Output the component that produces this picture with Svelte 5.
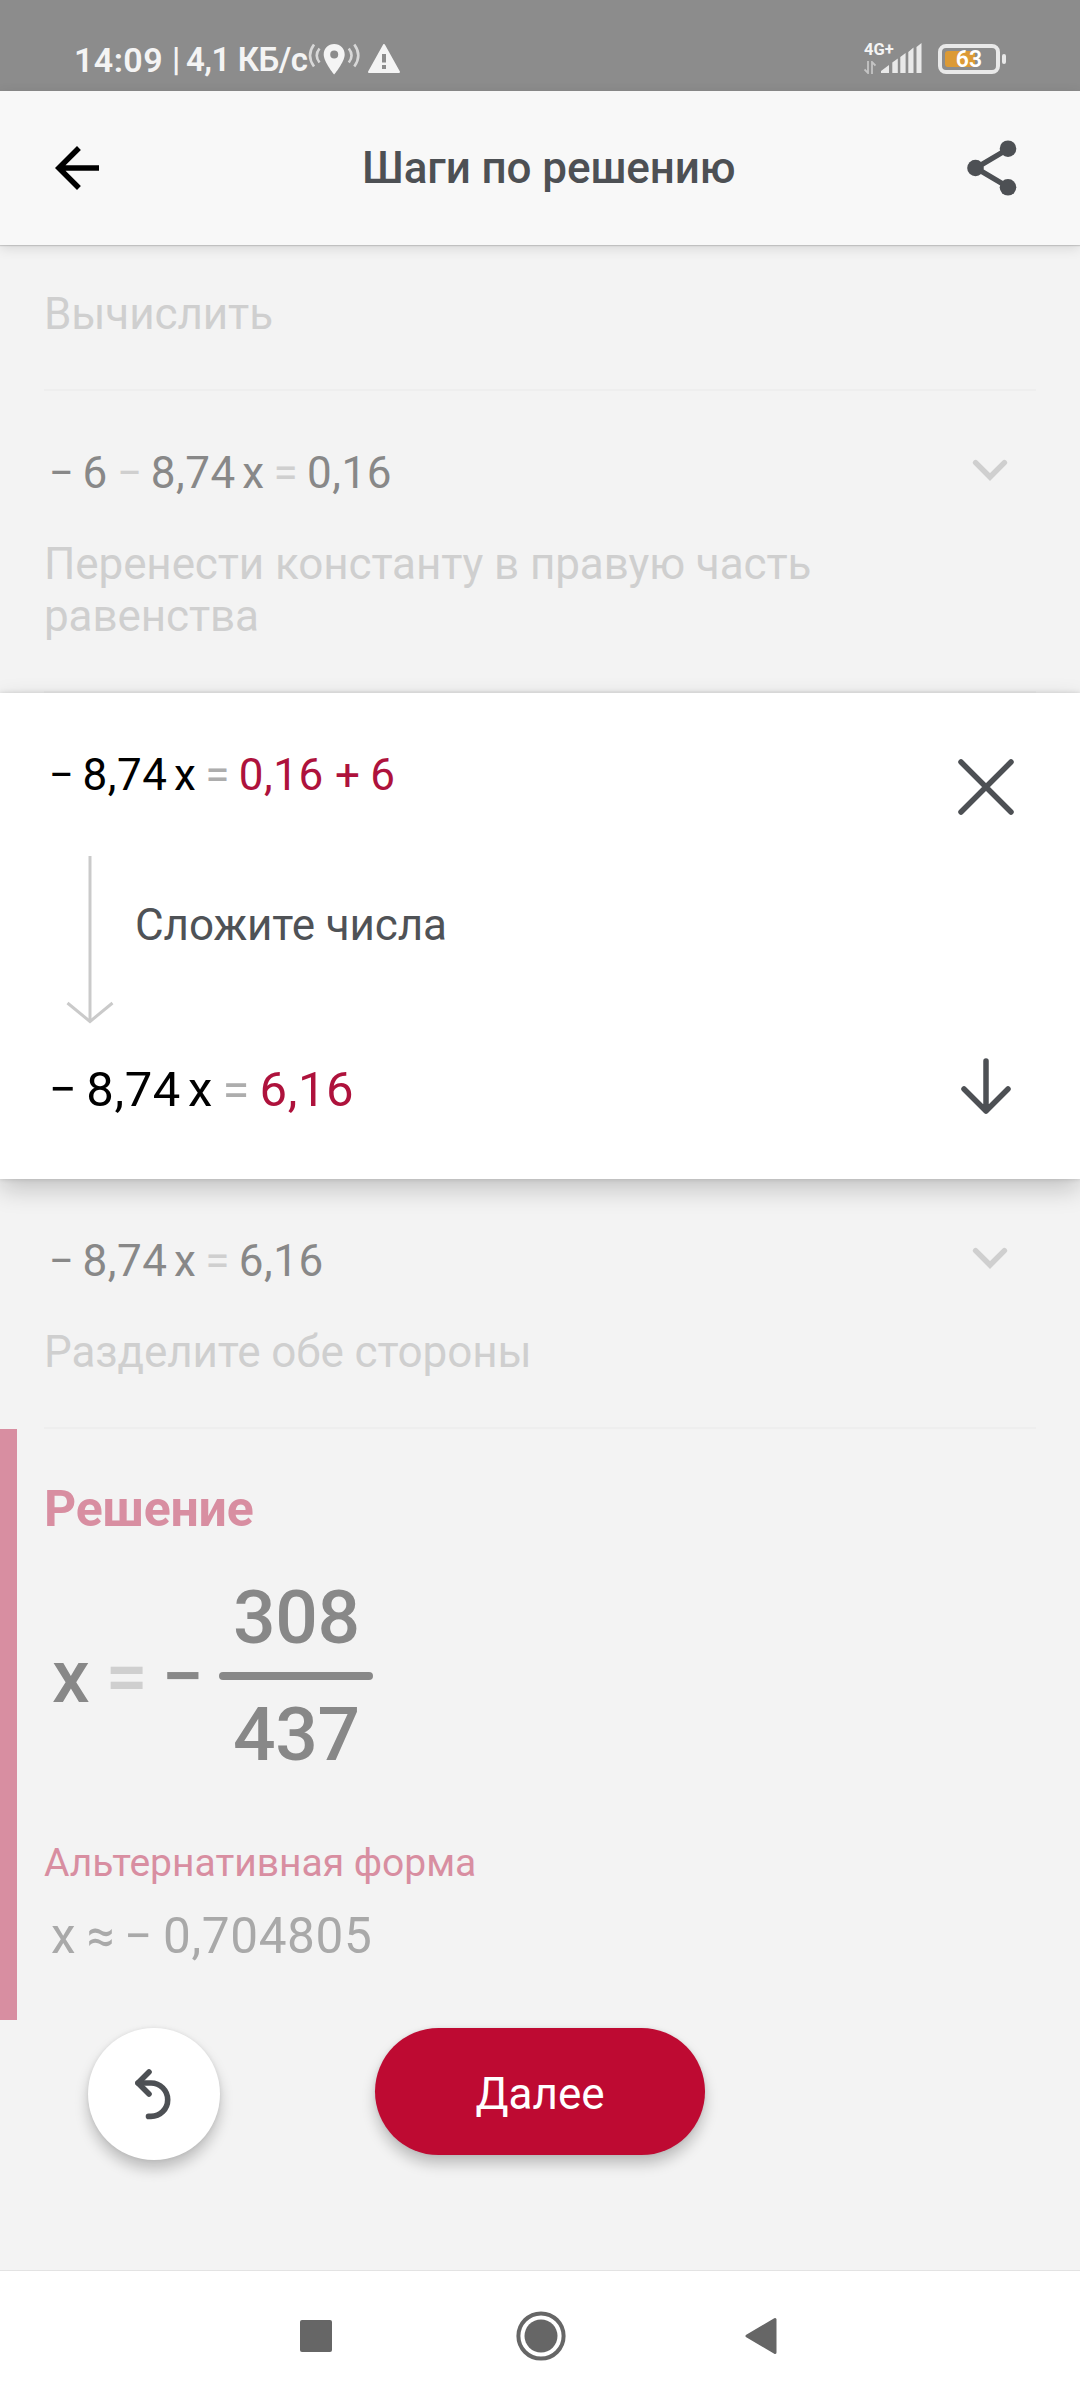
<script>
  const intro = 'Вычислить';

  const moveStep = {
    equation: [
      ['neg', '−'], ['num', '6'], ['op', '−'], ['num', '8,74'],
      ['var', 'x'], ['op', '='], ['num', '0,16'],
    ],
    text: 'Перенести константу в правую часть равенства',
  };

  const divideStep = {
    equation: [
      ['neg', '−'], ['num', '8,74'], ['var', 'x'], ['op', '='], ['num', '6,16'],
    ],
    text: 'Разделите обе стороны',
  };

  const before = [
    ['neg', '−'], ['num', '8,74'], ['var', 'x'], ['op', '='],
    ['num hot', '0,16'], ['op hot plus', '+'], ['num hot', '6'],
  ];
  const after = [
    ['neg', '−'], ['num', '8,74'], ['var', 'x'], ['op', '='], ['num hot', '6,16'],
  ];
  const approx = [
    ['var', 'x'], ['op same', '≈'], ['neg', '−'], ['num', '0,704805'],
  ];
</script>

{#snippet math(tokens)}
  {#each tokens as [kind, text]}
    <span class={kind}>{text}</span>
  {/each}
{/snippet}

{#snippet step(item)}
  <section class="step">
    <div class="row">
      <div class="math">{@render math(item.equation)}</div>
      <svg class="chevron" width="36" height="22" viewBox="0 0 36 22">
        <path d="M3.6 3.6 18 18 32.4 3.6" />
      </svg>
    </div>
    <p>{item.text}</p>
    <hr />
  </section>
{/snippet}

<div class="screen">
  <div class="status">
    <span class="clock">14:09</span>
    <span class="pipe">|</span>
    <span class="speed">4,1 КБ/с</span>
    <svg class="locate" width="52" height="32" viewBox="308 43 52 32">
      <path class="wave" d="M314 44.500q-8 11 0 22M319.500 48.500q-5.500 7 0 14M348.800 48.500q5.500 7 0 14M354.300 44.500q8 11 0 22" />
      <path d="M334.200 44c-6 0-10.500 4.500-10.500 10.500 0 7.500 10.500 20 10.500 20s10.500-12.500 10.500-20c0-6-4.500-10.500-10.500-10.500zm0 14.500a4 4 0 1 1 0-8 4 4 0 0 1 0 8z" />
    </svg>
    <svg class="warn" width="32" height="30" viewBox="0 0 32 30">
      <path d="M16 1 31 28H1z" stroke-width="2" stroke-linejoin="round" />
      <path class="mark" d="M16 10v8.500M16 21v4" />
    </svg>
    <div class="network">
      <span>4G+</span>
      <svg width="12" height="13" viewBox="0 0 12 13">
        <path d="M4 0v12L.5 8.500M8 13V1l3.500 3.500" />
      </svg>
    </div>
    <svg class="signal" width="41" height="31" viewBox="0 0 41 31">
      <path d="M0 30v-2l8-6v8zM11.300 30V19.500l5.500-4V30zM19.300 30V14l5.300-4v20zM27.300 30V9l5.200-4.500V30zM35.500 30V4l5-4v30z" />
    </svg>
    <div class="battery"><i></i><b>63</b></div>
    <div class="knob"></div>
  </div>

  <header>
    <svg width="66" height="66" viewBox="0 0 24 24">
      <path d="M20 11H7.830l5.590-5.590L12 4l-8 8 8 8 1.410-1.410L7.830 13H20z" />
    </svg>
    <h1>Шаги по решению</h1>
    <svg class="share" width="52" height="56" viewBox="0 0 52 56">
      <path d="M42 9 10 28l32 19" />
      <circle cx="42" cy="8.700" r="8.300" />
      <circle cx="9.500" cy="28" r="8.300" />
      <circle cx="42" cy="47.300" r="8.300" />
    </svg>
  </header>

  <main>
    <section class="step intro">
      <p>{intro}</p>
      <hr />
    </section>
    {@render step(moveStep)}

    <article class="card">
      <div class="work">
        <div class="math">{@render math(before)}</div>
        <div class="transition">
          <svg width="48" height="168" viewBox="0 0 48 168">
            <path d="M24 0v165" />
            <path d="M1.500 147 24 165.500 46.500 147" />
          </svg>
          <span>Сложите числа</span>
        </div>
        <div class="math large">{@render math(after)}</div>
      </div>
      <div class="controls">
        <svg width="56" height="56" viewBox="0 0 56 56">
          <path d="M3 3l50 50M53 3 3 53" />
        </svg>
        <svg width="56" height="56" viewBox="0 0 56 56">
          <path d="M28 3v50M6 31l22 22 22-22" />
        </svg>
      </div>
    </article>

    {@render step(divideStep)}

    <section class="solution">
      <h2>Решение</h2>
      <div class="math result">
        <span class="var">x</span>
        <span class="op">=</span>
        <span class="neg">−</span>
        <div class="fraction">
          <span>308</span>
          <i></i>
          <span>437</span>
        </div>
      </div>
      <h3>Альтернативная форма</h3>
      <div class="math approx">{@render math(approx)}</div>
    </section>

    <div class="actions">
      <button class="undo" aria-label="Назад">
        <svg width="40" height="52" viewBox="0 0 40 52">
          <path d="M15 4 4 15l11 11" />
          <path d="M4 15h13a16.700 16.700 0 0 1 0 33.400h-2.500" />
        </svg>
      </button>
      <button class="next">Далее</button>
    </div>
  </main>

  <nav>
    <svg width="34" height="34" viewBox="0 0 34 34"><rect x="1" y="1" width="32" height="32" rx="2" /></svg>
    <svg class="home" width="50" height="50" viewBox="0 0 50 50">
      <circle class="ring" cx="25" cy="25" r="22.600" />
      <circle cx="25" cy="25" r="16.500" />
    </svg>
    <svg width="34" height="38" viewBox="0 0 34 38">
      <path d="M3 19 31 2.500v33z" stroke-width="3" stroke-linejoin="round" />
    </svg>
  </nav>
</div>

<style>
  :global(body) {
    margin: 0;
    background: #f3f3f3;
  }

  .screen {
    width: 1080px;
    height: 2400px;
    display: flex;
    flex-direction: column;
    overflow: hidden;
    background: #f3f3f3;
    font-family: Roboto, 'Liberation Sans', sans-serif;
  }

  svg {
    display: block;
    flex: none;
  }

  h1, h2, h3, p, hr {
    margin: 0;
  }

  /* Status bar */
  .status {
    height: 91px;
    flex: none;
    box-sizing: border-box;
    padding: 40px 74px 0 74px;
    display: flex;
    align-items: flex-start;
    background: #8c8c8c;
    color: #f4f4f4;
    font-size: 33px;
    line-height: 40px;
    font-weight: 600;
    white-space: nowrap;
  }

  .clock {
    width: 98px;
    font-size: 34px;
    letter-spacing: 0.4px;
  }

  .pipe {
    width: 14px;
  }

  .speed {
    width: 122px;
    letter-spacing: -0.5px;
  }

  .locate {
    margin-top: 3px;
    fill: #f4f4f4;
  }

  .wave {
    fill: none;
    stroke: #d8d8d8;
    stroke-width: 2.6;
  }

  .warn {
    margin: 4px 0 0 8px;
    fill: #f4f4f4;
    stroke: #f4f4f4;
  }

  .warn .mark {
    stroke: #8c8c8c;
    stroke-width: 4;
  }

  .network {
    margin: 3px 0 0 auto;
    width: 17px;
    display: flex;
    flex-direction: column;
    gap: 5px;
    font-size: 16.500px;
    line-height: 13px;
    font-weight: 700;
  }

  .network path {
    fill: none;
    stroke: #c4c4c4;
    stroke-width: 1.8;
  }

  .signal {
    margin-top: 3px;
    fill: #e9e9e9;
  }

  .battery {
    position: relative;
    margin: 4px 0 0 16px;
    box-sizing: border-box;
    width: 62px;
    height: 30px;
    border: 4px solid #e9e9e9;
    border-radius: 8px;
    padding: 3px;
    line-height: 16px;
  }

  .battery i {
    display: block;
    width: 30px;
    height: 16px;
    border-radius: 3px;
    background: #dc9a35;
  }

  .battery b {
    position: absolute;
    inset: 0;
    line-height: 24px;
    font-size: 23px;
    font-weight: 600;
    text-align: center;
    color: #fff;
  }

  .knob {
    margin: 14px 0 0 2px;
    width: 4px;
    height: 10px;
    border-radius: 2px;
    background: #e9e9e9;
  }

  /* App bar */
  header {
    position: relative;
    z-index: 1;
    height: 154px;
    flex: none;
    box-sizing: border-box;
    padding: 0 62px 0 44px;
    display: flex;
    align-items: center;
    background: #f8f8f8;
    box-shadow: 0 1px 1px rgba(0, 0, 0, 0.14), 0 3px 12px rgba(0, 0, 0, 0.12);
  }

  h1 {
    margin: 0 auto 0 252px;
    font-size: 44px;
    line-height: 52px;
    font-weight: 500;
    color: #4d5054;
    letter-spacing: -0.1px;
  }

  .share {
    fill: #4d5054;
  }

  .share path {
    fill: none;
    stroke: #4d5054;
    stroke-width: 5.5;
  }

  /* Steps */
  main {
    flex: 1;
    display: flex;
    flex-direction: column;
  }

  .step {
    padding: 56px 44px 0;
    font-size: 44px;
    line-height: 52px;
    color: #cfcfcf;
  }

  .step.intro {
    padding-top: 43px;
  }

  .step p {
    width: 830px;
    letter-spacing: -0.1px;
  }

  .step hr {
    height: 2px;
    margin-top: 49px;
    border: 0;
    background: #eee;
  }

  .row {
    display: flex;
    justify-content: space-between;
    margin-bottom: 39px;
  }

  .chevron {
    margin: 12px 28px 0 0;
    fill: none;
    stroke: #cfcfcf;
    stroke-width: 5.5;
    stroke-linecap: round;
  }

  /* Equations */
  .math {
    display: flex;
    gap: 0.148em;
    padding-left: 2px;
    font-size: 44px;
    line-height: 52px;
    color: #888;
    white-space: nowrap;
  }

  .op, .neg {
    width: 0.682em;
    text-align: center;
  }

  .op {
    color: #cfcfcf;
  }

  .op + .neg {
    margin-left: -0.09em;
  }

  .num {
    letter-spacing: 0.012em;
  }

  .large {
    font-size: 49px;
    line-height: 58px;
    gap: 0.142em;
  }

  .plus {
    margin: 0 0.03em 0 0.05em;
  }

  /* Expanded step */
  .card {
    position: relative;
    z-index: 1;
    height: 486px;
    box-sizing: border-box;
    display: flex;
    justify-content: space-between;
    background: #fff;
    box-shadow: 0 10px 24px rgba(0, 0, 0, 0.2), 0 0 5px rgba(0, 0, 0, 0.14);
  }

  .work {
    padding: 56px 0 0 44px;
  }

  .card .math {
    color: #000;
  }

  .card .op {
    color: #adadad;
  }

  .card .hot {
    color: #ae123c;
  }

  .transition {
    display: flex;
    align-items: center;
    gap: 21px;
    margin: 55px 0 37px 22px;
    font-size: 44px;
    line-height: 52px;
    color: #4f5256;
    letter-spacing: -0.1px;
  }

  .transition span {
    padding-bottom: 31px;
  }

  .transition svg {
    fill: none;
    stroke: #cacaca;
    stroke-width: 3;
  }

  .controls {
    padding: 66px 66px 65px 0;
    display: flex;
    flex-direction: column;
    justify-content: space-between;
    fill: none;
    stroke: #4d5054;
    stroke-width: 5.5;
    stroke-linecap: round;
    stroke-linejoin: round;
  }

  /* Solution */
  .solution {
    height: 591px;
    box-sizing: border-box;
    padding: 51px 0 0 27px;
    border-left: 17px solid #d88ea1;
    color: #d88ea1;
  }

  h2 {
    font-size: 50px;
    line-height: 58px;
    font-weight: 700;
    letter-spacing: -0.2px;
  }

  .result {
    margin-top: 35px;
    padding-left: 8px;
    gap: 0.152em;
    align-items: center;
    font-size: 75px;
    line-height: 88px;
    font-weight: 500;
  }

  .fraction {
    width: 154px;
    display: flex;
    flex-direction: column;
    align-items: center;
    letter-spacing: -0.3px;
  }

  .fraction i {
    width: 100%;
    height: 8px;
    margin: 11px 0 10px;
    border-radius: 4px;
    background: #888;
  }

  h3 {
    margin-top: 62px;
    font-size: 39px;
    line-height: 46px;
    font-weight: 400;
  }

  .approx {
    margin-top: 21px;
    padding-left: 7px;
    gap: 0.165em;
    font-size: 49.500px;
    line-height: 58px;
    color: #a9a9a9;
  }

  .op.same {
    color: inherit;
  }

  /* Bottom actions */
  .actions {
    display: flex;
    gap: 155px;
    padding: 8px 0 0 88px;
  }

  button {
    border: 0;
    padding: 0;
    font-family: inherit;
    box-shadow: 0 9px 14px rgba(0, 0, 0, 0.22), 0 0 4px rgba(0, 0, 0, 0.08);
  }

  .undo {
    width: 132px;
    height: 132px;
    border-radius: 50%;
    display: flex;
    align-items: center;
    justify-content: center;
    background: #fff;
  }

  .undo svg {
    fill: none;
    stroke: #4d5054;
    stroke-width: 5.6;
    stroke-linecap: round;
    stroke-linejoin: round;
  }

  .next {
    width: 330px;
    height: 127px;
    padding-top: 5px;
    border-radius: 64px;
    background: #be0a32;
    color: #fff;
    font-size: 44px;
    line-height: 52px;
  }

  /* System navigation */
  nav {
    height: 130px;
    flex: none;
    box-sizing: border-box;
    padding: 0 302px 0 299px;
    border-top: 1px solid #e3e3e3;
    display: flex;
    align-items: center;
    justify-content: space-between;
    background: #fff;
    fill: #666;
    stroke: none;
  }

  nav path {
    stroke: #666;
  }

  .home {
    margin-left: 4px;
  }

  .ring {
    fill: none;
    stroke: #666;
    stroke-width: 4;
  }
</style>
